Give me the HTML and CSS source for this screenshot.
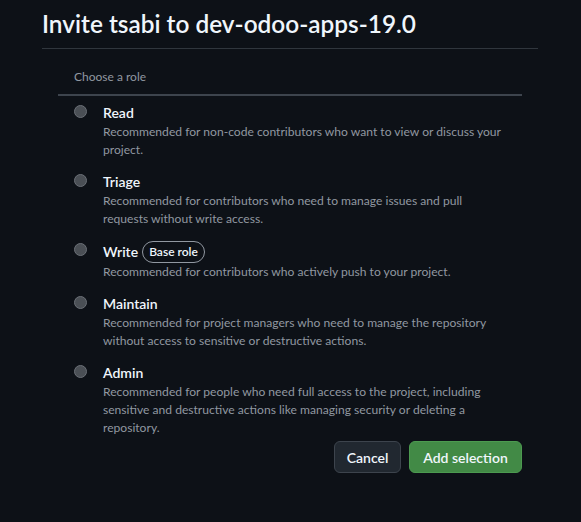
FILE: index.html
```html
<!DOCTYPE html>
<html lang="en">
<head>
<meta charset="utf-8">
<title>Invite collaborator</title>
<link rel="stylesheet" href="styles.css">
</head>
<body>
<div class="dialog">
  <h2 class="title">Invite tsabi to dev-odoo-apps-19.0</h2>
  <div class="roles">
    <div class="roles-header">Choose a role</div>
    <ul class="role-list">
      <li class="role">
        <span class="radio"></span>
        <div class="role-body">
          <div class="role-name">Read</div>
          <p class="role-desc">Recommended for non-code contributors who want to view or discuss your project.</p>
        </div>
      </li>
      <li class="role">
        <span class="radio"></span>
        <div class="role-body">
          <div class="role-name">Triage</div>
          <p class="role-desc">Recommended for contributors who need to manage issues and pull requests without write access.</p>
        </div>
      </li>
      <li class="role">
        <span class="radio"></span>
        <div class="role-body">
          <div class="role-name">Write <span class="badge">Base role</span></div>
          <p class="role-desc">Recommended for contributors who actively push to your project.</p>
        </div>
      </li>
      <li class="role">
        <span class="radio"></span>
        <div class="role-body">
          <div class="role-name">Maintain</div>
          <p class="role-desc">Recommended for project managers who need to manage the repository without access to sensitive or destructive actions.</p>
        </div>
      </li>
      <li class="role">
        <span class="radio"></span>
        <div class="role-body">
          <div class="role-name">Admin</div>
          <p class="role-desc">Recommended for people who need full access to the project, including sensitive and destructive actions like managing security or deleting a repository.</p>
        </div>
      </li>
    </ul>
    <div class="actions">
      <button class="btn btn-cancel" type="button">Cancel</button>
      <button class="btn btn-primary" type="button">Add selection</button>
    </div>
  </div>
</div>
</body>
</html>
```

FILE: styles.css
```css
* { box-sizing: border-box; }
html, body {
  margin: 0;
  padding: 0;
  background: #0d1117;
}
body {
  font-family: "Lato", "Liberation Sans", sans-serif;
  color: #f0f6fc;
  width: 581px;
  height: 522px;
  overflow: hidden;
}
.dialog {
  margin: 0 43px 0 42px;
  padding-top: 8px;
}
.title {
  margin: 0;
  font-size: 24.4px;
  line-height: 32px;
  font-weight: 600;
  padding-bottom: 8px;
  border-bottom: 1px solid #30363d;
}
.roles {
  margin: 19px 16px 0 16px;
}
.roles-header {
  font-size: 12px;
  line-height: 18px;
  color: #9198a1;
  padding: 0 16px 8px 16px;
  border-bottom: 2px solid #3d444d;
}
.role-list {
  list-style: none;
  margin: 0;
  padding: 7px 0 0 0;
  display: flex;
  flex-direction: column;
  gap: 13px;
}
.role {
  display: flex;
  align-items: flex-start;
  gap: 16px;
  padding: 0 16px;
}
.radio {
  flex: none;
  width: 13px;
  height: 13px;
  margin-top: 2px;
  border-radius: 50%;
  background: #4a4f55;
  border: 1px solid #6b7077;
}
.role-body {
  flex: 1;
}
.role-name {
  font-size: 14px;
  line-height: 20px;
  font-weight: 600;
  display: flex;
  align-items: center;
  gap: 4px;
}
.badge {
  display: inline-block;
  font-size: 12px;
  line-height: 20px;
  font-weight: 600;
  padding: 0 6px;
  border: 1px solid #9198a1;
  border-radius: 11px;
}
.role-desc {
  margin: 0;
  font-size: 12.1px;
  line-height: 18px;
  color: #9198a1;
}
.actions {
  display: flex;
  justify-content: flex-end;
  gap: 8px;
  margin-top: 4px;
}
.btn {
  font-family: inherit;
  font-size: 14px;
  font-weight: 600;
  height: 32px;
  padding: 0;
  white-space: nowrap;
  border-radius: 6px;
  color: #f0f6fc;
  cursor: pointer;
}
.btn-cancel {
  background: #212830;
  border: 1px solid #3d444d;
  width: 67px;
}
.btn-primary {
  background: #428a46;
  border: 1px solid #4c9a50;
  width: 113px;
}
```
